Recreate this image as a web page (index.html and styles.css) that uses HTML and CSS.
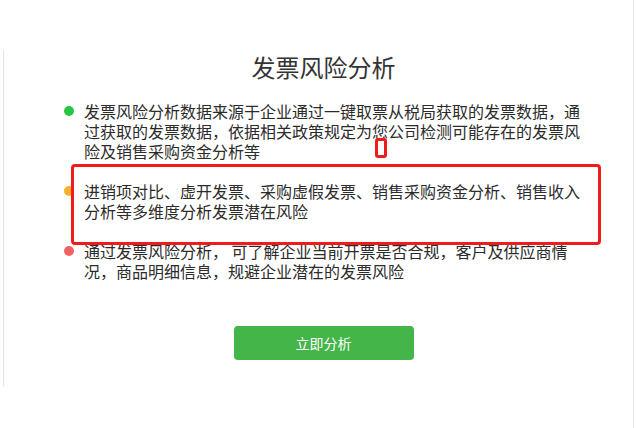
FILE: index.html
```html
<!DOCTYPE html>
<html lang="zh-CN">
<head>
  <meta charset="UTF-8">
  <meta name="viewport" content="width=device-width, initial-scale=1.0">
  <title>发票风险分析</title>
  <link rel="stylesheet" href="styles.css">
</head>
<body>
  <div class="frame">
    <div class="panel">
      <h1 class="title">发票风险分析</h1>

      <ul class="points">
        <li class="point">
          <span class="dot dot-green"></span>
          <p>发票风险分析数据来源于企业通过一键取票从税局获取的发票数据，通过获取的发票数据，依据相关政策规定为您公司检测可能存在的发票风险及销售采购资金分析等</p>
        </li>
        <li class="point">
          <span class="dot dot-orange"></span>
          <p>进销项对比、虚开发票、采购虚假发票、销售采购资金分析、销售收入分析等多维度分析发票潜在风险</p>
        </li>
        <li class="point">
          <span class="dot dot-red"></span>
          <p>通过发票风险分析， 可了解企业当前开票是否合规，客户及供应商情况，商品明细信息，规避企业潜在的发票风险</p>
        </li>
      </ul>

      <button class="btn" type="button">立即分析</button>
    </div>

    <!-- annotation marks -->
    <div class="mark mark-box"></div>
    <div class="mark mark-small"></div>
  </div>
</body>
</html>
```

FILE: styles.css
```css
/* Styles globaux */
html, body {
  margin: 0;
  padding: 0;
  background: #fff;
  overflow: hidden;
}

body {
  font-family: "Noto Sans CJK SC", "Microsoft YaHei", sans-serif;
  color: #333;
}

.frame {
  position: relative;
  box-sizing: border-box;
  width: 634px;
  height: 428px;
  padding-top: 50px;
  border-right: 1px solid #e6e6e6;
}

.panel {
  box-sizing: border-box;
  width: 640px;
  height: 336px;
  margin-left: 3px;
  border-left: 1px solid #e3e3e3;
}

.title {
  margin: 0;
  font-size: 24px;
  font-weight: normal;
  line-height: 34px;
  text-align: center;
  color: #333;
}

.points {
  list-style: none;
  margin: 17px 0 0 60px;
  padding: 0;
}

.point {
  display: flex;
  align-items: flex-start;
  margin-bottom: 20px;
}

.point:last-child {
  margin-bottom: 0;
}

.dot {
  flex: none;
  width: 10px;
  height: 10px;
  margin-top: 5px;
  margin-right: 10px;
  border-radius: 50%;
}

.dot-green { background: #28c443; }
.dot-orange { background: #f7b02d; }
.dot-red { background: #f26262; }

.point p {
  width: 497px;
  margin: 0;
  font-size: 16px;
  line-height: 20px;
  color: #2b2b2b;
}

.btn {
  display: block;
  width: 180px;
  height: 34px;
  margin: 45px auto 0;
  padding: 0;
  border: none;
  border-radius: 4px;
  background: #44b549;
  color: #fff;
  font-family: inherit;
  font-size: 14px;
  cursor: pointer;
}

.mark {
  position: absolute;
  border: 3px solid #f21b1b;
  border-radius: 4px;
}

.mark-box {
  left: 71px;
  top: 164px;
  width: 524px;
  height: 75px;
}

.mark-small {
  left: 375px;
  top: 138px;
  width: 6px;
  height: 14px;
  border-radius: 3px;
}
```
